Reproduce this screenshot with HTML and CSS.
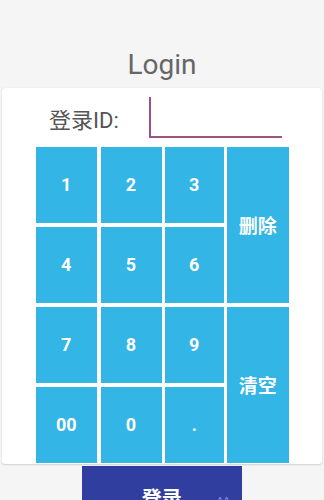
FILE: index.html
```html
<!DOCTYPE html>
<html lang="zh">
<head>
<meta charset="utf-8">
<title>Login</title>
<link rel="stylesheet" href="styles.css">
</head>
<body>
<div class="page">
  <h1 class="title">Login</h1>
  <div class="card">
    <div class="id-row">
      <span class="label">登录ID:</span>
      <div class="input"><span class="cursor"></span></div>
    </div>
    <div class="keypad">
      <button class="key">1</button>
      <button class="key">2</button>
      <button class="key">3</button>
      <button class="key key-tall">删除</button>
      <button class="key">4</button>
      <button class="key">5</button>
      <button class="key">6</button>
      <button class="key">7</button>
      <button class="key">8</button>
      <button class="key">9</button>
      <button class="key key-tall">清空</button>
      <button class="key">00</button>
      <button class="key">0</button>
      <button class="key">.</button>
    </div>
  </div>
  <div class="actions">
    <button class="login-btn">登录<span class="mark">ʌʌ</span></button>
  </div>
</div>
</body>
</html>
```

FILE: styles.css
```css
* { box-sizing: border-box; }
html, body {
  margin: 0;
  padding: 0;
  background: #f5f5f5;
  font-family: Roboto, "Noto Sans CJK SC", sans-serif;
}
.page {
  width: 324px;
  height: 500px;
  overflow: hidden;
}
.title {
  margin: 0;
  padding: 48px 0 7px;
  height: 88px;
  font-size: 28px;
  line-height: 33px;
  font-weight: 400;
  color: #666666;
  text-align: center;
}
.card {
  margin: 0 2px;
  width: 320px;
  height: 376px;
  background: #ffffff;
  border-radius: 3px;
  box-shadow: 0 1px 2px rgba(0,0,0,0.14), 0 0 1px rgba(0,0,0,0.12);
  padding-top: 9px;
}
.id-row {
  display: flex;
  align-items: center;
  height: 41px;
}
.label {
  margin-left: 47px;
  width: 100px;
  font-size: 22px;
  color: #555555;
}
.input {
  width: 133px;
  height: 41px;
  border-bottom: 2px solid #9c5582;
  display: flex;
}
.cursor {
  width: 2px;
  height: 39px;
  background: #9c4f80;
}
.keypad {
  margin: 8.7px auto 0;
  width: 253px;
  display: grid;
  grid-template-columns: 61.5px 61px 58.5px 61.5px;
  grid-template-rows: repeat(4, 76.5px);
  gap: 3.5px;
}
.key {
  border: 0;
  padding: 0;
  margin: 0;
  background: #33b5e5;
  color: #ffffff;
  font-family: Roboto, "Noto Sans CJK SC", sans-serif;
  font-size: 18px;
  font-weight: 700;
  display: flex;
  align-items: center;
  justify-content: center;
}
.key-tall {
  grid-column: 4;
  grid-row: span 2;
  font-size: 19px;
}
.actions {
  padding-top: 2px;
  display: flex;
  padding-left: 81.7px;
}
.login-btn {
  position: relative;
  width: 160px;
  height: 48px;
  border: 0;
  margin: 0;
  padding: 17px 0 0;
  background: #303f9f;
  color: #ffffff;
  font-family: Roboto, "Noto Sans CJK SC", sans-serif;
  font-size: 20px;
  line-height: 24px;
  font-weight: 700;
  text-align: center;
  align-self: flex-start;
  display: block;
}
.mark {
  position: absolute;
  left: 135px;
  top: 27px;
  font-size: 13px;
  font-weight: 400;
  color: #7c86cc;
  line-height: 13px;
}
```
